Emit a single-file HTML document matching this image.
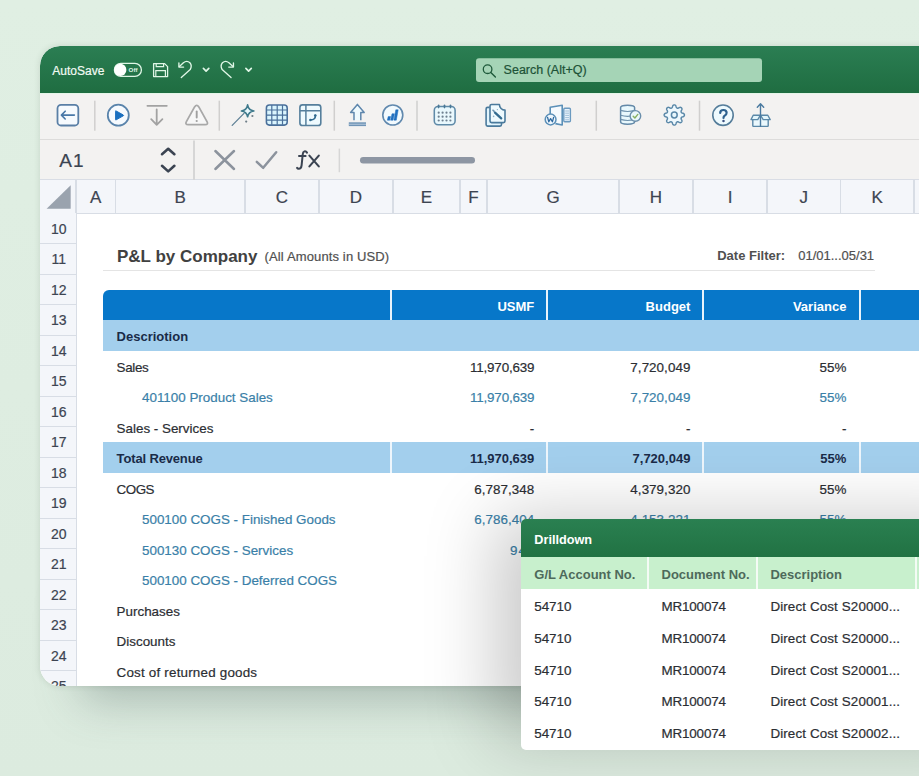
<!DOCTYPE html>
<html><head><meta charset="utf-8"><style>
*{box-sizing:border-box;margin:0;padding:0}
html,body{width:919px;height:776px;overflow:hidden}
body{background:linear-gradient(180deg,#e0efe3 0%,#dcebdf 100%);font-family:"Liberation Sans",sans-serif;position:relative}
.n{-webkit-text-stroke:0.2px currentColor}
#win{position:absolute;left:40px;top:46px;width:940px;height:640px;border-radius:20px 0 0 20px;background:#fff;box-shadow:0 0 6px rgba(60,85,70,.16)}
svg{position:absolute;left:0;top:0;overflow:visible}
#clip{position:absolute;left:0;top:0;width:919px;height:776px;clip-path:inset(46px 0 90px 40px round 20px 0 0 20px)}
</style></head><body>
<div style="position:absolute;left:72px;top:560px;width:940px;height:126px;border-radius:20px;box-shadow:0 24px 44px -8px rgba(80,100,98,.34)"></div>
<div id="win"></div>
<div id="clip">
<div style="position:absolute;left:40.00px;top:46.00px;width:960.00px;height:47.00px;background:linear-gradient(180deg,#2b7e53,#1f6d41);border-top-left-radius:20px;"></div>
<div style="position:absolute;left:40.00px;top:93.00px;width:960.00px;height:47.00px;background:#f3f2f1;border-bottom:1px solid #dddcdb;"></div>
<div style="position:absolute;left:40.00px;top:93.00px;width:960.00px;height:1.00px;background:#e4f5e8;"></div>
<div style="position:absolute;left:102.20px;top:350.70px;width:1.00px;height:335.30px;background:#efefef;"></div>
<div style="position:absolute;left:40.00px;top:140.00px;width:960.00px;height:40.00px;background:#f3f2f1;border-bottom:1px solid #d9dde5;"></div>
<div style="position:absolute;left:40.00px;top:180.00px;width:960.00px;height:33.90px;background:#f4f6fa;border-bottom:1.2px solid #d8dde5;"></div>
<div style="position:absolute;left:40.00px;top:213.30px;width:36.80px;height:472.70px;background:#f4f6fa;border-right:1.2px solid #d8dde5;border-bottom-left-radius:20px;"></div>
<div style="position:absolute;left:76.80px;top:213.90px;width:923.20px;height:472.10px;background:#ffffff;"></div>
<div style="position:absolute;left:75.40px;top:180.00px;width:1.20px;height:33.30px;background:#d8dde5;"></div>
<div style="position:absolute;left:114.90px;top:180.00px;width:1.20px;height:33.30px;background:#d8dde5;"></div>
<div class="n" style="position:absolute;top:187.62px;font-size:17px;line-height:18.989px;color:#3d4451;font-weight:normal;white-space:nowrap;left:-104.25px;width:400px;text-align:center;">A</div>
<div style="position:absolute;left:244.40px;top:180.00px;width:1.20px;height:33.30px;background:#d8dde5;"></div>
<div class="n" style="position:absolute;top:187.62px;font-size:17px;line-height:18.989px;color:#3d4451;font-weight:normal;white-space:nowrap;left:-19.75px;width:400px;text-align:center;">B</div>
<div style="position:absolute;left:318.40px;top:180.00px;width:1.20px;height:33.30px;background:#d8dde5;"></div>
<div class="n" style="position:absolute;top:187.62px;font-size:17px;line-height:18.989px;color:#3d4451;font-weight:normal;white-space:nowrap;left:82.00px;width:400px;text-align:center;">C</div>
<div style="position:absolute;left:392.40px;top:180.00px;width:1.20px;height:33.30px;background:#d8dde5;"></div>
<div class="n" style="position:absolute;top:187.62px;font-size:17px;line-height:18.989px;color:#3d4451;font-weight:normal;white-space:nowrap;left:156.00px;width:400px;text-align:center;">D</div>
<div style="position:absolute;left:459.40px;top:180.00px;width:1.20px;height:33.30px;background:#d8dde5;"></div>
<div class="n" style="position:absolute;top:187.62px;font-size:17px;line-height:18.989px;color:#3d4451;font-weight:normal;white-space:nowrap;left:226.50px;width:400px;text-align:center;">E</div>
<div style="position:absolute;left:486.40px;top:180.00px;width:1.20px;height:33.30px;background:#d8dde5;"></div>
<div class="n" style="position:absolute;top:187.62px;font-size:17px;line-height:18.989px;color:#3d4451;font-weight:normal;white-space:nowrap;left:273.50px;width:400px;text-align:center;">F</div>
<div style="position:absolute;left:618.40px;top:180.00px;width:1.20px;height:33.30px;background:#d8dde5;"></div>
<div class="n" style="position:absolute;top:187.62px;font-size:17px;line-height:18.989px;color:#3d4451;font-weight:normal;white-space:nowrap;left:353.00px;width:400px;text-align:center;">G</div>
<div style="position:absolute;left:692.40px;top:180.00px;width:1.20px;height:33.30px;background:#d8dde5;"></div>
<div class="n" style="position:absolute;top:187.62px;font-size:17px;line-height:18.989px;color:#3d4451;font-weight:normal;white-space:nowrap;left:456.00px;width:400px;text-align:center;">H</div>
<div style="position:absolute;left:766.40px;top:180.00px;width:1.20px;height:33.30px;background:#d8dde5;"></div>
<div class="n" style="position:absolute;top:187.62px;font-size:17px;line-height:18.989px;color:#3d4451;font-weight:normal;white-space:nowrap;left:530.00px;width:400px;text-align:center;">I</div>
<div style="position:absolute;left:839.90px;top:180.00px;width:1.20px;height:33.30px;background:#d8dde5;"></div>
<div class="n" style="position:absolute;top:187.62px;font-size:17px;line-height:18.989px;color:#3d4451;font-weight:normal;white-space:nowrap;left:603.75px;width:400px;text-align:center;">J</div>
<div style="position:absolute;left:913.40px;top:180.00px;width:1.20px;height:33.30px;background:#d8dde5;"></div>
<div class="n" style="position:absolute;top:187.62px;font-size:17px;line-height:18.989px;color:#3d4451;font-weight:normal;white-space:nowrap;left:677.25px;width:400px;text-align:center;">K</div>
<div style="position:absolute;left:999.40px;top:180.00px;width:1.20px;height:33.30px;background:#d8dde5;"></div>
<div style="position:absolute;left:40.00px;top:243.20px;width:36.00px;height:1.20px;background:#d8dde5;"></div>
<div class="n" style="position:absolute;top:221.63px;font-size:14px;line-height:15.638px;color:#3d4451;font-weight:normal;white-space:nowrap;left:-141.20px;width:400px;text-align:center;">10</div>
<div style="position:absolute;left:40.00px;top:273.70px;width:36.00px;height:1.20px;background:#d8dde5;"></div>
<div class="n" style="position:absolute;top:252.13px;font-size:14px;line-height:15.638px;color:#3d4451;font-weight:normal;white-space:nowrap;left:-141.20px;width:400px;text-align:center;">11</div>
<div style="position:absolute;left:40.00px;top:304.20px;width:36.00px;height:1.20px;background:#d8dde5;"></div>
<div class="n" style="position:absolute;top:282.63px;font-size:14px;line-height:15.638px;color:#3d4451;font-weight:normal;white-space:nowrap;left:-141.20px;width:400px;text-align:center;">12</div>
<div style="position:absolute;left:40.00px;top:334.70px;width:36.00px;height:1.20px;background:#d8dde5;"></div>
<div class="n" style="position:absolute;top:313.13px;font-size:14px;line-height:15.638px;color:#3d4451;font-weight:normal;white-space:nowrap;left:-141.20px;width:400px;text-align:center;">13</div>
<div style="position:absolute;left:40.00px;top:365.20px;width:36.00px;height:1.20px;background:#d8dde5;"></div>
<div class="n" style="position:absolute;top:343.63px;font-size:14px;line-height:15.638px;color:#3d4451;font-weight:normal;white-space:nowrap;left:-141.20px;width:400px;text-align:center;">14</div>
<div style="position:absolute;left:40.00px;top:395.70px;width:36.00px;height:1.20px;background:#d8dde5;"></div>
<div class="n" style="position:absolute;top:374.13px;font-size:14px;line-height:15.638px;color:#3d4451;font-weight:normal;white-space:nowrap;left:-141.20px;width:400px;text-align:center;">15</div>
<div style="position:absolute;left:40.00px;top:426.20px;width:36.00px;height:1.20px;background:#d8dde5;"></div>
<div class="n" style="position:absolute;top:404.63px;font-size:14px;line-height:15.638px;color:#3d4451;font-weight:normal;white-space:nowrap;left:-141.20px;width:400px;text-align:center;">16</div>
<div style="position:absolute;left:40.00px;top:456.70px;width:36.00px;height:1.20px;background:#d8dde5;"></div>
<div class="n" style="position:absolute;top:435.13px;font-size:14px;line-height:15.638px;color:#3d4451;font-weight:normal;white-space:nowrap;left:-141.20px;width:400px;text-align:center;">17</div>
<div style="position:absolute;left:40.00px;top:487.20px;width:36.00px;height:1.20px;background:#d8dde5;"></div>
<div class="n" style="position:absolute;top:465.63px;font-size:14px;line-height:15.638px;color:#3d4451;font-weight:normal;white-space:nowrap;left:-141.20px;width:400px;text-align:center;">18</div>
<div style="position:absolute;left:40.00px;top:517.70px;width:36.00px;height:1.20px;background:#d8dde5;"></div>
<div class="n" style="position:absolute;top:496.13px;font-size:14px;line-height:15.638px;color:#3d4451;font-weight:normal;white-space:nowrap;left:-141.20px;width:400px;text-align:center;">19</div>
<div style="position:absolute;left:40.00px;top:548.20px;width:36.00px;height:1.20px;background:#d8dde5;"></div>
<div class="n" style="position:absolute;top:526.63px;font-size:14px;line-height:15.638px;color:#3d4451;font-weight:normal;white-space:nowrap;left:-141.20px;width:400px;text-align:center;">20</div>
<div style="position:absolute;left:40.00px;top:578.70px;width:36.00px;height:1.20px;background:#d8dde5;"></div>
<div class="n" style="position:absolute;top:557.13px;font-size:14px;line-height:15.638px;color:#3d4451;font-weight:normal;white-space:nowrap;left:-141.20px;width:400px;text-align:center;">21</div>
<div style="position:absolute;left:40.00px;top:609.20px;width:36.00px;height:1.20px;background:#d8dde5;"></div>
<div class="n" style="position:absolute;top:587.63px;font-size:14px;line-height:15.638px;color:#3d4451;font-weight:normal;white-space:nowrap;left:-141.20px;width:400px;text-align:center;">22</div>
<div style="position:absolute;left:40.00px;top:639.70px;width:36.00px;height:1.20px;background:#d8dde5;"></div>
<div class="n" style="position:absolute;top:618.13px;font-size:14px;line-height:15.638px;color:#3d4451;font-weight:normal;white-space:nowrap;left:-141.20px;width:400px;text-align:center;">23</div>
<div style="position:absolute;left:40.00px;top:670.20px;width:36.00px;height:1.20px;background:#d8dde5;"></div>
<div class="n" style="position:absolute;top:648.63px;font-size:14px;line-height:15.638px;color:#3d4451;font-weight:normal;white-space:nowrap;left:-141.20px;width:400px;text-align:center;">24</div>
<div style="position:absolute;left:40.00px;top:700.70px;width:36.00px;height:1.20px;background:#d8dde5;"></div>
<div class="n" style="position:absolute;top:679.13px;font-size:14px;line-height:15.638px;color:#3d4451;font-weight:normal;white-space:nowrap;left:-141.20px;width:400px;text-align:center;">25</div>
<div class="n" style="position:absolute;top:65.14px;font-size:12px;line-height:13.404px;color:#f2fbf4;font-weight:normal;white-space:nowrap;left:52.30px;">AutoSave</div>
<svg width="919" height="776" viewBox="0 0 919 776"><rect x="114.4" y="63.4" width="27" height="13" rx="6.5" fill="none" stroke="#dff6e6" stroke-width="1.3"/><circle cx="120.3" cy="69.9" r="6.1" fill="#ffffff"/><text x="128.6" y="72.2" font-family="Liberation Sans" font-weight="bold" font-size="6.2" fill="#dff6e6">Off</text><path d="M153.6,63.6 H164.6 L167.6,66.6 V76.6 H153.6 Z" fill="none" stroke="#dff6e6" stroke-width="1.3" stroke-linejoin="round"/><path d="M156.2,63.6 V66.6 H163.6 V63.6" fill="none" stroke="#dff6e6" stroke-width="1.2"/><path d="M155.8,76.6 V70.6 H165.4 V76.6" fill="none" stroke="#dff6e6" stroke-width="1.2"/><g  fill="none" stroke="#dff6e6" stroke-width="1.35" stroke-linecap="round" stroke-linejoin="round"><path d="M179.4,66.4 L183.4,62.8 Q186.8,60.0 189.9,62.8 Q192.4,65.6 190.2,69.6 L181.3,77.5"/><path d="M178.9,63.0 V67.1 H183.6"/></g><g transform="translate(412.35,0) scale(-1,1)" fill="none" stroke="#dff6e6" stroke-width="1.35" stroke-linecap="round" stroke-linejoin="round"><path d="M179.4,66.4 L183.4,62.8 Q186.8,60.0 189.9,62.8 Q192.4,65.6 190.2,69.6 L181.3,77.5"/><path d="M178.9,63.0 V67.1 H183.6"/></g><path d="M203.4,68.4 L206.1,71.1 L208.79999999999998,68.4" fill="none" stroke="#dff6e6" stroke-width="1.7" stroke-linecap="round" stroke-linejoin="round"/><path d="M245.9,68.4 L248.6,71.1 L251.29999999999998,68.4" fill="none" stroke="#dff6e6" stroke-width="1.7" stroke-linecap="round" stroke-linejoin="round"/><rect x="476" y="58.2" width="286" height="23.7" rx="3" fill="#a5d4b6"/><circle cx="487.6" cy="69.2" r="4.3" fill="none" stroke="#1f5a3b" stroke-width="1.3"/><path d="M490.8,72.4 L495.4,77" stroke="#1f5a3b" stroke-width="1.4" stroke-linecap="round"/><rect x="94.05" y="100.7" width="1.5" height="30" fill="#d0cfce"/><rect x="218.55" y="100.7" width="1.5" height="30" fill="#d0cfce"/><rect x="333.55" y="100.7" width="1.5" height="30" fill="#d0cfce"/><rect x="416.25" y="100.7" width="1.5" height="30" fill="#d0cfce"/><rect x="595.55" y="100.7" width="1.5" height="30" fill="#d0cfce"/><rect x="698.75" y="100.7" width="1.5" height="30" fill="#d0cfce"/><rect x="57.5" y="104.9" width="20.8" height="20.6" rx="3.5" fill="#f6fafe" stroke="#5a7fa6" stroke-width="1.8"/><path d="M61.6,115.1 H74.4 M65.2,111.2 L61.4,115.1 L65.2,119.0" fill="none" stroke="#4878a8" stroke-width="1.6" stroke-linecap="round" stroke-linejoin="round"/><circle cx="118.3" cy="115.2" r="10.5" fill="#f6fafe" stroke="#5a84ab" stroke-width="1.8"/><path d="M115.6,111.4 Q115.2,110.6 116.2,111 L123.3,115 Q123.9,115.4 123.3,115.8 L116.2,119.8 Q115.2,120.2 115.6,119.4 Z" fill="#1a6fbf" stroke="#1a6fbf" stroke-width="1" stroke-linejoin="round"/><path d="M147.4,105.8 H166.8 M156.7,109.5 V124.6 M151.2,119.2 L156.7,124.8 L162.4,119.2" fill="none" stroke="#a2a2a2" stroke-width="1.8" stroke-linecap="round" stroke-linejoin="round"/><path d="M194.6,106.9 Q196.7,103.8 198.8,106.9 L207.0,121.6 Q208.6,124.6 205.2,124.6 H188.2 Q184.8,124.6 186.4,121.6 Z" fill="#f7f7f7" stroke="#a8a8a8" stroke-width="1.8" stroke-linejoin="round"/><path d="M196.7,111.4 V117.6" stroke="#a0a0a0" stroke-width="1.9" stroke-linecap="round"/><circle cx="196.7" cy="121" r="1.1" fill="#a0a0a0"/><path d="M232.2,125.4 L244.0,113.4" stroke="#5f8196" stroke-width="1.3" stroke-linecap="round"/><path d="M247.6,104.9 Q248.4,110.2 253.9,111 Q248.4,111.8 247.6,116.8 Q246.8,111.8 241.4,111 Q246.8,110.2 247.6,104.9 Z" fill="#e8f8fd" stroke="#3f7a8c" stroke-width="1.6" stroke-linejoin="round"/><circle cx="252.4" cy="116.0" r="1.1" fill="#6f7f88"/><circle cx="246.2" cy="121.6" r="1.1" fill="#6f7f88"/><rect x="266.4" y="104.9" width="20.8" height="20.2" rx="3" fill="#d9f4fd" stroke="#4a6f9a" stroke-width="1.55"/><path d="M271.8,105.1 V124.8 M277.2,105.1 V124.8 M282.5,105.1 V124.8 M266.5,110 H287.1 M266.5,115.2 H287.1 M266.5,120.2 H287.1" stroke="#4a6f9a" stroke-width="1.2"/><rect x="299.9" y="104.9" width="20.9" height="20.6" rx="2.6" fill="#eefafe" stroke="#557f9c" stroke-width="1.6"/><path d="M305.9,104.9 V125.5 M299.9,110.7 H320.8" stroke="#557f9c" stroke-width="1.5"/><path d="M315.4,115.4 Q315.6,119.8 310.6,119.9" fill="none" stroke="#2f6a8f" stroke-width="1.6" stroke-linecap="round"/><circle cx="315.3" cy="115.5" r="1.3" fill="#2f6a8f"/><circle cx="310.4" cy="120.0" r="1.3" fill="#2f6a8f"/><path d="M354.0,120.2 V112.4 H350.6 L357.4,104.4 L364.2,112.4 H360.8 V120.2" fill="#effafe" stroke="#5f87ad" stroke-width="1.5" stroke-linejoin="round"/><rect x="348.8" y="122.3" width="17.2" height="3.8" fill="#6f94b6"/><rect x="348.8" y="123.8" width="17.2" height="0.8" fill="#c4d5e4"/><circle cx="392.8" cy="115" r="10" fill="#f2fafe" stroke="#6189ae" stroke-width="1.6"/><path d="M387.3,120.2 L388.2,116.6 L390.6,116.6 L389.7,120.2 Z M390.6,120.2 L392.0,113.8 L394.4,113.8 L393.0,120.2 Z M393.9,120.2 L395.8,109.8 L398.2,109.8 L396.3,120.2 Z" fill="#2070c0" stroke="#2070c0" stroke-width="0.5" stroke-linejoin="round"/><rect x="434.3" y="106.4" width="20.8" height="18.4" rx="3.8" fill="#e9f8fd" stroke="#5f8aa8" stroke-width="1.55"/><path d="M438.6,105.2 V107.6" stroke="#4a7896" stroke-width="1.6" stroke-linecap="round"/><path d="M444.5,105.2 V107.6" stroke="#4a7896" stroke-width="1.6" stroke-linecap="round"/><path d="M450.5,105.2 V107.6" stroke="#4a7896" stroke-width="1.6" stroke-linecap="round"/><circle cx="438.7" cy="112.7" r="1.1" fill="#6e8090"/><circle cx="442.6" cy="112.7" r="1.1" fill="#6e8090"/><circle cx="446.5" cy="112.7" r="1.1" fill="#6e8090"/><circle cx="450.4" cy="112.7" r="1.1" fill="#6e8090"/><circle cx="438.7" cy="116.7" r="1.1" fill="#6e8090"/><circle cx="442.6" cy="116.7" r="1.1" fill="#6e8090"/><circle cx="446.5" cy="116.7" r="1.1" fill="#6e8090"/><circle cx="450.4" cy="116.7" r="1.1" fill="#6e8090"/><circle cx="438.7" cy="120.5" r="1.1" fill="#6e8090"/><circle cx="442.6" cy="120.5" r="1.1" fill="#6e8090"/><circle cx="446.5" cy="120.5" r="1.1" fill="#6e8090"/><circle cx="450.4" cy="120.5" r="1.1" fill="#6e8090"/><path d="M489.6,107.4 H487.6 Q486.1,107.4 486.1,108.9 V124.6 Q486.1,126.1 487.6,126.1 H500.0 Q501.5,126.1 501.5,124.6 V122.8" fill="#e2f5fd" stroke="#4a7a9c" stroke-width="1.6" stroke-linejoin="round"/><path d="M491.6,104.5 H499.4 A5.6,5.6 0 0 0 505.0,110.1 V121.0 Q505.0,122.6 503.4,122.6 H491.6 Q490.0,122.6 490.0,121.0 V106.1 Q490.0,104.5 491.6,104.5 Z" fill="#eefafe" stroke="#4a7a9c" stroke-width="1.6" stroke-linejoin="round"/><path d="M495.0,112.6 L501.2,118.4" stroke="#336c90" stroke-width="2.3" stroke-linecap="round"/><path d="M493.0,110.2 L494.2,111.4" stroke="#6e95b0" stroke-width="1.6" stroke-linecap="round"/><circle cx="497.4" cy="109.6" r="0.7" fill="#8fb0c6"/><circle cx="493.6" cy="116.4" r="0.8" fill="#8fb0c6"/><path d="M550.2,116 V107.2 L562.2,105.2 V125 L555.4,123.6" fill="#f5fafe" stroke="#5b90b8" stroke-width="1.6" stroke-linejoin="round"/><rect x="563.8" y="108.2" width="6.6" height="13.6" rx="1" fill="#e8f2fb" stroke="#6b9ac0" stroke-width="1.4"/><path d="M565.2,111 H569 M565.2,113.2 H569 M565.2,115.4 H569 M565.2,117.6 H569 M565.2,119.8 H569" stroke="#8fb2cf" stroke-width="0.8"/><circle cx="550.6" cy="119.5" r="5.4" fill="#eef6fd" stroke="#5b90b8" stroke-width="1.5"/><path d="M547.6,117.4 L548.8,121.8 L550.6,118.6 L552.4,121.8 L553.6,117.4" fill="none" stroke="#2e6aa0" stroke-width="1.3" stroke-linejoin="round" stroke-linecap="round"/><path d="M620.6,107.6 Q620.6,105.2 627.6,105.2 Q634.6,105.2 634.6,107.6 V121.8 Q634.6,124.2 627.6,124.2 Q620.6,124.2 620.6,121.8 Z" fill="#e8f8fd" stroke="#6389a8" stroke-width="1.5"/><path d="M620.6,110.4 Q627.6,112.6 634.6,110.4 M620.6,115.2 Q627.6,117.4 634.6,115.2 M620.6,119.4 Q627.6,121.6 634.6,119.4" fill="none" stroke="#6f92ad" stroke-width="1.2"/><circle cx="635.4" cy="115.9" r="5.3" fill="#eaf8fb" stroke="#6a8eab" stroke-width="1.4"/><path d="M633.2,116.2 L634.9,118.0 L637.8,114.4" fill="none" stroke="#88b062" stroke-width="1.4" stroke-linecap="round" stroke-linejoin="round"/><path d="M684.45,115.00 L684.40,115.40 L684.25,115.78 L683.99,116.15 L683.61,116.48 L682.93,116.72 L682.24,116.91 L681.85,117.13 L681.55,117.36 L681.33,117.59 L681.18,117.85 L681.11,118.14 L681.09,118.46 L681.14,118.83 L681.27,119.27 L681.62,119.89 L681.93,120.54 L681.96,121.04 L681.89,121.48 L681.72,121.86 L681.48,122.18 L681.16,122.42 L680.78,122.59 L680.34,122.66 L679.84,122.63 L679.19,122.32 L678.57,121.97 L678.13,121.84 L677.76,121.79 L677.44,121.81 L677.15,121.88 L676.89,122.03 L676.66,122.25 L676.43,122.55 L676.21,122.94 L676.02,123.63 L675.78,124.31 L675.45,124.69 L675.08,124.95 L674.70,125.10 L674.30,125.15 L673.90,125.10 L673.52,124.95 L673.15,124.69 L672.82,124.31 L672.58,123.63 L672.39,122.94 L672.17,122.55 L671.94,122.25 L671.71,122.03 L671.45,121.88 L671.16,121.81 L670.84,121.79 L670.47,121.84 L670.03,121.97 L669.41,122.32 L668.76,122.63 L668.26,122.66 L667.82,122.59 L667.44,122.42 L667.12,122.18 L666.88,121.86 L666.71,121.48 L666.64,121.04 L666.67,120.54 L666.98,119.89 L667.33,119.27 L667.46,118.83 L667.51,118.46 L667.49,118.14 L667.42,117.85 L667.27,117.59 L667.05,117.36 L666.75,117.13 L666.36,116.91 L665.67,116.72 L664.99,116.48 L664.61,116.15 L664.35,115.78 L664.20,115.40 L664.15,115.00 L664.20,114.60 L664.35,114.22 L664.61,113.85 L664.99,113.52 L665.67,113.28 L666.36,113.09 L666.75,112.87 L667.05,112.64 L667.27,112.41 L667.42,112.15 L667.49,111.86 L667.51,111.54 L667.46,111.17 L667.33,110.73 L666.98,110.11 L666.67,109.46 L666.64,108.96 L666.71,108.52 L666.88,108.14 L667.12,107.82 L667.44,107.58 L667.82,107.41 L668.26,107.34 L668.76,107.37 L669.41,107.68 L670.03,108.03 L670.47,108.16 L670.84,108.21 L671.16,108.19 L671.45,108.12 L671.71,107.97 L671.94,107.75 L672.17,107.45 L672.39,107.06 L672.58,106.37 L672.82,105.69 L673.15,105.31 L673.52,105.05 L673.90,104.90 L674.30,104.85 L674.70,104.90 L675.08,105.05 L675.45,105.31 L675.78,105.69 L676.02,106.37 L676.21,107.06 L676.43,107.45 L676.66,107.75 L676.89,107.97 L677.15,108.12 L677.44,108.19 L677.76,108.21 L678.13,108.16 L678.57,108.03 L679.19,107.68 L679.84,107.37 L680.34,107.34 L680.78,107.41 L681.16,107.58 L681.48,107.82 L681.72,108.14 L681.89,108.52 L681.96,108.96 L681.93,109.46 L681.62,110.11 L681.27,110.73 L681.14,111.17 L681.09,111.54 L681.11,111.86 L681.18,112.15 L681.33,112.41 L681.55,112.64 L681.85,112.87 L682.24,113.09 L682.93,113.28 L683.61,113.52 L683.99,113.85 L684.25,114.22 L684.40,114.60 Z" fill="#eef8fd" stroke="#5a88a8" stroke-width="1.45" stroke-linejoin="round"/><circle cx="674.3" cy="115.0" r="2.9" fill="#e8f7fd" stroke="#5a88a8" stroke-width="1.5"/><circle cx="723" cy="115.2" r="10.2" fill="#eefafe" stroke="#557d9a" stroke-width="1.6"/><path d="M720.2,113.0 Q720.2,110.0 723.4,110.0 Q726.6,110.0 726.6,112.8 Q726.6,114.8 724.6,115.8 Q723.5,116.4 723.5,118.0" fill="none" stroke="#2d6290" stroke-width="2.2" stroke-linecap="round"/><circle cx="723.5" cy="121.0" r="1.25" fill="#3a4f80"/><path d="M752.8,118.4 V125.8 Q752.8,126.4 753.4,126.4 H767.6 Q768.2,126.4 768.2,125.8 V118.4" fill="#eaf8fd" stroke="#5a88a8" stroke-width="1.4" stroke-linejoin="round"/><path d="M753.2,115.2 H760.4 L757.8,119.6 H751.0 Z M760.4,115.2 H767.8 L770.2,119.6 H763.2 Z" fill="#e4f6fc" stroke="#5a88a8" stroke-width="1.35" stroke-linejoin="round"/><path d="M760.5,104.0 V126.2 M757.3,107.2 L760.5,103.8 L763.7,107.2" fill="none" stroke="#4a7aa0" stroke-width="1.4" stroke-linecap="round" stroke-linejoin="round"/><path d="M162.0,154.2 L168.2,148.8 L174.4,154.2 M162.0,165.8 L168.2,171.4 L174.4,165.8" fill="none" stroke="#3b4452" stroke-width="2.6" stroke-linecap="round" stroke-linejoin="round"/><rect x="193" y="140.5" width="2" height="39.5" fill="#d6d6d6"/><path d="M215.4,151 L234,169 M234,151 L215.4,169" stroke="#8c939d" stroke-width="2.5" stroke-linecap="round"/><path d="M256.8,161.8 L263.2,167.8 L276.2,152.2" fill="none" stroke="#8c939d" stroke-width="2.5" stroke-linecap="round" stroke-linejoin="round"/><path d="M307.0,152.6 Q306.0,151.0 304.4,151.4 Q302.9,151.9 302.7,154.6 L301.6,165.4 Q301.2,168.9 298.6,168.8 Q297.6,168.7 297.1,167.9 M299.0,156.0 H305.6" fill="none" stroke="#3b4452" stroke-width="2.0" stroke-linecap="round"/><path d="M309.4,155.6 L318.8,166.4 M318.8,155.6 L309.4,166.4" stroke="#3b4452" stroke-width="2.1" stroke-linecap="round"/><rect x="338.6" y="148.6" width="1.5" height="23.6" fill="#d6d6d6"/><rect x="360" y="157" width="115" height="6.4" rx="3.2" fill="#8d96a3"/><path d="M46.6,208.8 L70.7,185.3 V208.8 Z" fill="#9aa3ae"/></svg>
<div class="n" style="position:absolute;top:64.39px;font-size:12.5px;line-height:13.963px;color:#1d5236;font-weight:normal;white-space:nowrap;left:503.60px;">Search (Alt+Q)</div>
<div class="n" style="position:absolute;top:150.00px;font-size:19px;line-height:21.223px;color:#3b4452;font-weight:normal;white-space:nowrap;letter-spacing:1.0px;left:59.20px;">A<span style="letter-spacing:0">1</span></div>
<div style="position:absolute;top:246.81px;font-size:17px;line-height:18.989px;color:#414141;font-weight:bold;white-space:nowrap;left:117.00px;">P&amp;L by Company</div>
<div class="n" style="position:absolute;top:250.44px;font-size:13px;line-height:14.521px;color:#505050;font-weight:normal;white-space:nowrap;letter-spacing:0.13px;left:264.60px;">(All Amounts in USD)</div>
<div style="position:absolute;top:249.24px;font-size:13px;line-height:14.521px;color:#505050;font-weight:bold;white-space:nowrap;left:717.20px;">Date Filter:</div>
<div class="n" style="position:absolute;top:249.24px;font-size:13px;line-height:14.521px;color:#505050;font-weight:normal;white-space:nowrap;left:798.20px;">01/01...05/31</div>
<div style="position:absolute;left:103.00px;top:269.80px;width:772.20px;height:1.00px;background:#e4e4e4;"></div>
<div style="position:absolute;left:103.00px;top:290.00px;width:897.00px;height:30.30px;background:#0777c9;border-top-left-radius:6px;"></div>
<div style="position:absolute;left:390.00px;top:290.00px;width:2.00px;height:30.30px;background:#e9f3fb;"></div>
<div style="position:absolute;left:546.40px;top:290.00px;width:2.00px;height:30.30px;background:#e9f3fb;"></div>
<div style="position:absolute;left:702.40px;top:290.00px;width:2.00px;height:30.30px;background:#e9f3fb;"></div>
<div style="position:absolute;left:859.00px;top:290.00px;width:2.00px;height:30.30px;background:#e9f3fb;"></div>
<div style="position:absolute;top:300.04px;font-size:13px;line-height:14.521px;color:#ffffff;font-weight:bold;white-space:nowrap;left:134.30px;width:400px;text-align:right;">USMF</div>
<div style="position:absolute;top:300.04px;font-size:13px;line-height:14.521px;color:#ffffff;font-weight:bold;white-space:nowrap;left:290.40px;width:400px;text-align:right;">Budget</div>
<div style="position:absolute;top:300.04px;font-size:13px;line-height:14.521px;color:#ffffff;font-weight:bold;white-space:nowrap;left:446.40px;width:400px;text-align:right;">Variance</div>
<div style="position:absolute;left:103.00px;top:320.30px;width:897.00px;height:30.40px;background:#a3cfed;"></div>
<div style="position:absolute;top:329.74px;font-size:13px;line-height:14.521px;color:#1a2b48;font-weight:bold;white-space:nowrap;left:116.60px;">Descriotion</div>
<div class="n" style="position:absolute;top:360.57px;font-size:13.4px;line-height:14.968px;color:#2b2e33;font-weight:normal;white-space:nowrap;letter-spacing:-0.35px;left:116.60px;">Sales</div>
<div class="n" style="position:absolute;top:360.57px;font-size:13.4px;line-height:14.968px;color:#2b2e33;font-weight:normal;white-space:nowrap;letter-spacing:-0.17px;left:134.30px;width:400px;text-align:right;">11,970,639</div>
<div class="n" style="position:absolute;top:360.57px;font-size:13.4px;line-height:14.968px;color:#2b2e33;font-weight:normal;white-space:nowrap;letter-spacing:0.05px;left:290.40px;width:400px;text-align:right;">7,720,049</div>
<div class="n" style="position:absolute;top:360.57px;font-size:13.4px;line-height:14.968px;color:#2b2e33;font-weight:normal;white-space:nowrap;letter-spacing:0.05px;left:446.40px;width:400px;text-align:right;">55%</div>
<div class="n" style="position:absolute;top:391.07px;font-size:13.4px;line-height:14.968px;color:#3a7fa8;font-weight:normal;white-space:nowrap;left:142.00px;">401100 Product Sales</div>
<div class="n" style="position:absolute;top:391.07px;font-size:13.4px;line-height:14.968px;color:#3a7fa8;font-weight:normal;white-space:nowrap;letter-spacing:-0.17px;left:134.30px;width:400px;text-align:right;">11,970,639</div>
<div class="n" style="position:absolute;top:391.07px;font-size:13.4px;line-height:14.968px;color:#3a7fa8;font-weight:normal;white-space:nowrap;letter-spacing:0.05px;left:290.40px;width:400px;text-align:right;">7,720,049</div>
<div class="n" style="position:absolute;top:391.07px;font-size:13.4px;line-height:14.968px;color:#3a7fa8;font-weight:normal;white-space:nowrap;letter-spacing:0.05px;left:446.40px;width:400px;text-align:right;">55%</div>
<div class="n" style="position:absolute;top:421.57px;font-size:13.4px;line-height:14.968px;color:#2b2e33;font-weight:normal;white-space:nowrap;left:116.60px;">Sales - Services</div>
<div class="n" style="position:absolute;top:421.57px;font-size:13.4px;line-height:14.968px;color:#2b2e33;font-weight:normal;white-space:nowrap;letter-spacing:0.05px;left:134.30px;width:400px;text-align:right;">-</div>
<div class="n" style="position:absolute;top:421.57px;font-size:13.4px;line-height:14.968px;color:#2b2e33;font-weight:normal;white-space:nowrap;letter-spacing:0.05px;left:290.40px;width:400px;text-align:right;">-</div>
<div class="n" style="position:absolute;top:421.57px;font-size:13.4px;line-height:14.968px;color:#2b2e33;font-weight:normal;white-space:nowrap;letter-spacing:0.05px;left:446.40px;width:400px;text-align:right;">-</div>
<div style="position:absolute;left:103.00px;top:442.20px;width:897.00px;height:30.50px;background:#a3cfed;"></div>
<div style="position:absolute;left:390.00px;top:442.20px;width:2.00px;height:30.50px;background:#eef6fc;"></div>
<div style="position:absolute;left:546.40px;top:442.20px;width:2.00px;height:30.50px;background:#eef6fc;"></div>
<div style="position:absolute;left:702.40px;top:442.20px;width:2.00px;height:30.50px;background:#eef6fc;"></div>
<div style="position:absolute;left:859.00px;top:442.20px;width:2.00px;height:30.50px;background:#eef6fc;"></div>
<div style="position:absolute;top:452.44px;font-size:13px;line-height:14.521px;color:#1a2b48;font-weight:bold;white-space:nowrap;letter-spacing:-0.15px;left:116.60px;">Total Revenue</div>
<div style="position:absolute;top:452.44px;font-size:13px;line-height:14.521px;color:#1a2b48;font-weight:bold;white-space:nowrap;left:134.30px;width:400px;text-align:right;">11,970,639</div>
<div style="position:absolute;top:452.44px;font-size:13px;line-height:14.521px;color:#1a2b48;font-weight:bold;white-space:nowrap;left:290.40px;width:400px;text-align:right;">7,720,049</div>
<div style="position:absolute;top:452.44px;font-size:13px;line-height:14.521px;color:#1a2b48;font-weight:bold;white-space:nowrap;left:446.40px;width:400px;text-align:right;">55%</div>
<div class="n" style="position:absolute;top:482.57px;font-size:13.4px;line-height:14.968px;color:#2b2e33;font-weight:normal;white-space:nowrap;letter-spacing:-0.5px;left:116.60px;">COGS</div>
<div class="n" style="position:absolute;top:482.57px;font-size:13.4px;line-height:14.968px;color:#2b2e33;font-weight:normal;white-space:nowrap;letter-spacing:0.05px;left:134.30px;width:400px;text-align:right;">6,787,348</div>
<div class="n" style="position:absolute;top:482.57px;font-size:13.4px;line-height:14.968px;color:#2b2e33;font-weight:normal;white-space:nowrap;letter-spacing:0.05px;left:290.40px;width:400px;text-align:right;">4,379,320</div>
<div class="n" style="position:absolute;top:482.57px;font-size:13.4px;line-height:14.968px;color:#2b2e33;font-weight:normal;white-space:nowrap;letter-spacing:0.05px;left:446.40px;width:400px;text-align:right;">55%</div>
<div class="n" style="position:absolute;top:513.07px;font-size:13.4px;line-height:14.968px;color:#3a7fa8;font-weight:normal;white-space:nowrap;left:142.00px;">500100 COGS - Finished Goods</div>
<div class="n" style="position:absolute;top:513.07px;font-size:13.4px;line-height:14.968px;color:#3a7fa8;font-weight:normal;white-space:nowrap;letter-spacing:0.05px;left:134.30px;width:400px;text-align:right;">6,786,404</div>
<div class="n" style="position:absolute;top:513.07px;font-size:13.4px;line-height:14.968px;color:#3a7fa8;font-weight:normal;white-space:nowrap;letter-spacing:0.05px;left:290.40px;width:400px;text-align:right;">4,153,221</div>
<div class="n" style="position:absolute;top:513.07px;font-size:13.4px;line-height:14.968px;color:#3a7fa8;font-weight:normal;white-space:nowrap;letter-spacing:0.05px;left:446.40px;width:400px;text-align:right;">55%</div>
<div class="n" style="position:absolute;top:543.57px;font-size:13.4px;line-height:14.968px;color:#3a7fa8;font-weight:normal;white-space:nowrap;left:142.00px;">500130 COGS - Services</div>
<div class="n" style="position:absolute;top:543.57px;font-size:13.4px;line-height:14.968px;color:#3a7fa8;font-weight:normal;white-space:nowrap;letter-spacing:1.0px;left:134.30px;width:400px;text-align:right;">94<span style="letter-spacing:0">4</span></div>
<div class="n" style="position:absolute;top:574.07px;font-size:13.4px;line-height:14.968px;color:#3a7fa8;font-weight:normal;white-space:nowrap;left:142.00px;">500100 COGS - Deferred COGS</div>
<div class="n" style="position:absolute;top:604.57px;font-size:13.4px;line-height:14.968px;color:#2b2e33;font-weight:normal;white-space:nowrap;left:116.60px;">Purchases</div>
<div class="n" style="position:absolute;top:635.07px;font-size:13.4px;line-height:14.968px;color:#2b2e33;font-weight:normal;white-space:nowrap;left:116.60px;">Discounts</div>
<div class="n" style="position:absolute;top:665.57px;font-size:13.4px;line-height:14.968px;color:#2b2e33;font-weight:normal;white-space:nowrap;letter-spacing:0.2px;left:116.60px;">Cost of returned goods</div>
</div>
<div style="position:absolute;left:521px;top:519px;width:500px;height:230.7px;border-radius:5px;background:#fff;box-shadow:-30px -6px 70px -4px rgba(0,0,0,.21);overflow:hidden"><div style="position:absolute;left:0;top:0;width:100%;height:38.2px;background:linear-gradient(180deg,#2a8051,#217243)"></div><div style="position:absolute;left:0;top:38.2px;width:100%;height:32.3px;background:#c8f0cd"></div></div>
<div style="position:absolute;left:646.90px;top:557.20px;width:2.00px;height:32.30px;background:#f4fbf5;"></div>
<div style="position:absolute;left:755.70px;top:557.20px;width:2.00px;height:32.30px;background:#f4fbf5;"></div>
<div style="position:absolute;left:915.30px;top:557.20px;width:2.00px;height:32.30px;background:#f4fbf5;"></div>
<div style="position:absolute;top:532.51px;font-size:12.7px;line-height:14.186px;color:#ffffff;font-weight:bold;white-space:nowrap;left:534.30px;">Drilldown</div>
<div style="position:absolute;top:567.53px;font-size:13px;line-height:14.521px;color:#4e6a5b;font-weight:bold;white-space:nowrap;left:534.30px;">G/L Account No.</div>
<div style="position:absolute;top:567.53px;font-size:13px;line-height:14.521px;color:#4e6a5b;font-weight:bold;white-space:nowrap;left:661.50px;">Document No.</div>
<div style="position:absolute;top:567.53px;font-size:13px;line-height:14.521px;color:#4e6a5b;font-weight:bold;white-space:nowrap;left:770.40px;">Description</div>
<div class="n" style="position:absolute;top:599.87px;font-size:13.4px;line-height:14.968px;color:#2b2e33;font-weight:normal;white-space:nowrap;letter-spacing:-0.05px;left:534.30px;">54710</div>
<div class="n" style="position:absolute;top:599.87px;font-size:13.4px;line-height:14.968px;color:#2b2e33;font-weight:normal;white-space:nowrap;letter-spacing:-0.15px;left:661.50px;">MR100074</div>
<div class="n" style="position:absolute;top:599.87px;font-size:13.4px;line-height:14.968px;color:#2b2e33;font-weight:normal;white-space:nowrap;letter-spacing:0.12px;left:770.40px;">Direct Cost S20000...</div>
<div class="n" style="position:absolute;top:631.72px;font-size:13.4px;line-height:14.968px;color:#2b2e33;font-weight:normal;white-space:nowrap;letter-spacing:-0.05px;left:534.30px;">54710</div>
<div class="n" style="position:absolute;top:631.72px;font-size:13.4px;line-height:14.968px;color:#2b2e33;font-weight:normal;white-space:nowrap;letter-spacing:-0.15px;left:661.50px;">MR100074</div>
<div class="n" style="position:absolute;top:631.72px;font-size:13.4px;line-height:14.968px;color:#2b2e33;font-weight:normal;white-space:nowrap;letter-spacing:0.12px;left:770.40px;">Direct Cost S20000...</div>
<div class="n" style="position:absolute;top:663.57px;font-size:13.4px;line-height:14.968px;color:#2b2e33;font-weight:normal;white-space:nowrap;letter-spacing:-0.05px;left:534.30px;">54710</div>
<div class="n" style="position:absolute;top:663.57px;font-size:13.4px;line-height:14.968px;color:#2b2e33;font-weight:normal;white-space:nowrap;letter-spacing:-0.15px;left:661.50px;">MR100074</div>
<div class="n" style="position:absolute;top:663.57px;font-size:13.4px;line-height:14.968px;color:#2b2e33;font-weight:normal;white-space:nowrap;letter-spacing:0.12px;left:770.40px;">Direct Cost S20001...</div>
<div class="n" style="position:absolute;top:695.42px;font-size:13.4px;line-height:14.968px;color:#2b2e33;font-weight:normal;white-space:nowrap;letter-spacing:-0.05px;left:534.30px;">54710</div>
<div class="n" style="position:absolute;top:695.42px;font-size:13.4px;line-height:14.968px;color:#2b2e33;font-weight:normal;white-space:nowrap;letter-spacing:-0.15px;left:661.50px;">MR100074</div>
<div class="n" style="position:absolute;top:695.42px;font-size:13.4px;line-height:14.968px;color:#2b2e33;font-weight:normal;white-space:nowrap;letter-spacing:0.12px;left:770.40px;">Direct Cost S20001...</div>
<div class="n" style="position:absolute;top:727.27px;font-size:13.4px;line-height:14.968px;color:#2b2e33;font-weight:normal;white-space:nowrap;letter-spacing:-0.05px;left:534.30px;">54710</div>
<div class="n" style="position:absolute;top:727.27px;font-size:13.4px;line-height:14.968px;color:#2b2e33;font-weight:normal;white-space:nowrap;letter-spacing:-0.15px;left:661.50px;">MR100074</div>
<div class="n" style="position:absolute;top:727.27px;font-size:13.4px;line-height:14.968px;color:#2b2e33;font-weight:normal;white-space:nowrap;letter-spacing:0.12px;left:770.40px;">Direct Cost S20002...</div>

</body></html>
